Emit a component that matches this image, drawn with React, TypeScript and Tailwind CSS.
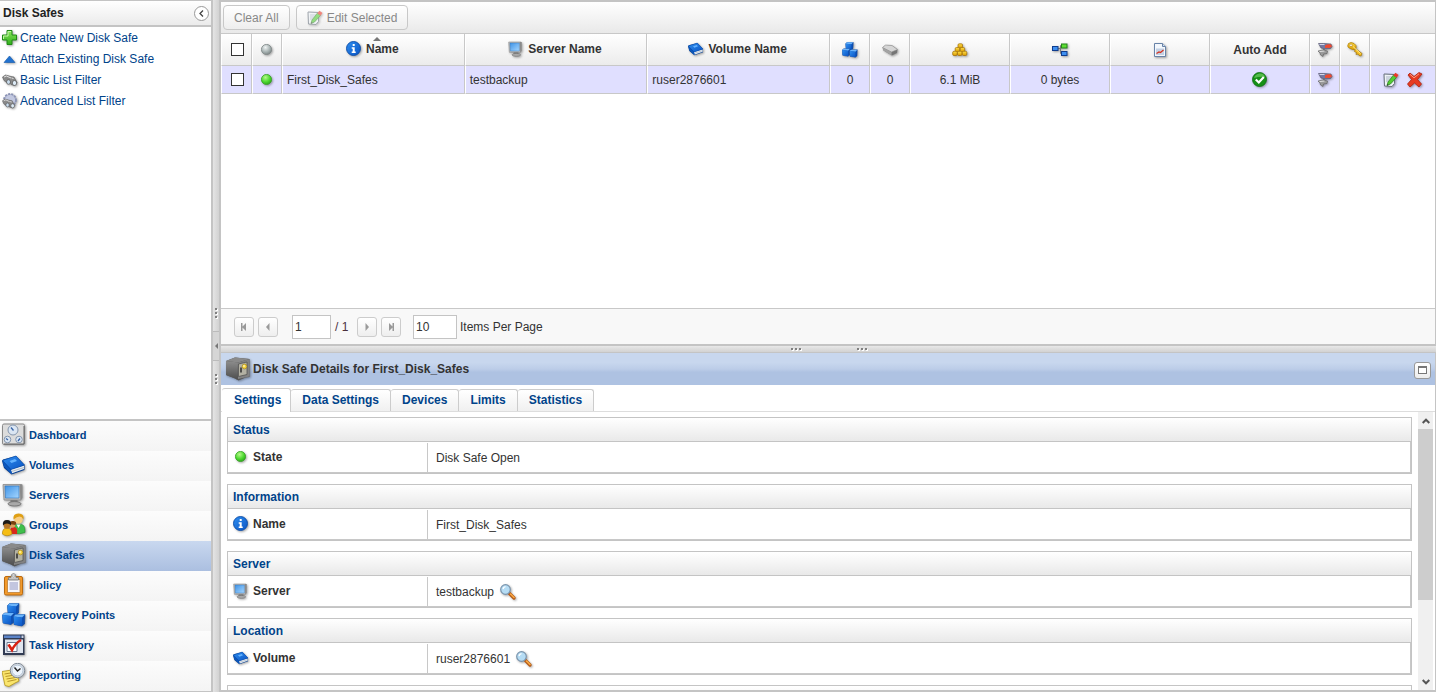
import type { ComponentType, ReactNode } from "react";

type IconProps = { size?: number };
type IconType = ComponentType<IconProps>;

function Svg({ size = 16, box = 16, children }: { size?: number; box?: number; children: ReactNode }) {
  return (
    <svg
      width={size}
      height={size}
      viewBox={`0 0 ${box} ${box}`}
      aria-hidden="true"
      className="shrink-0 drop-shadow-[1px_1px_1px_rgba(0,0,0,0.35)]"
    >
      {children}
    </svg>
  );
}

// Gradients shared by all the icons
function IconDefs() {
  return (
    <svg width="0" height="0" className="absolute" aria-hidden="true">
      <defs>
        <radialGradient id="g-green" cx="0.4" cy="0.3" r="0.7">
          <stop offset="0" stopColor="#b6f78c" />
          <stop offset="0.6" stopColor="#4fdb32" />
          <stop offset="1" stopColor="#2fa81e" />
        </radialGradient>
        <radialGradient id="g-gray" cx="0.4" cy="0.3" r="0.7">
          <stop offset="0" stopColor="#f1f5f5" />
          <stop offset="0.6" stopColor="#aab5b5" />
          <stop offset="1" stopColor="#7f8888" />
        </radialGradient>
        <linearGradient id="g-blue" x1="0" y1="0" x2="1" y2="1">
          <stop offset="0" stopColor="#2f8ff0" />
          <stop offset="1" stopColor="#0a54c4" />
        </linearGradient>
        <linearGradient id="g-screen" x1="0" y1="0" x2="1" y2="1">
          <stop offset="0" stopColor="#3f93e6" />
          <stop offset="1" stopColor="#a5d6ff" />
        </linearGradient>
        <linearGradient id="g-metal" x1="0" y1="0" x2="0" y2="1">
          <stop offset="0" stopColor="#f4f4f4" />
          <stop offset="1" stopColor="#b5b5b5" />
        </linearGradient>
        <linearGradient id="g-dark" x1="0" y1="0" x2="0" y2="1">
          <stop offset="0" stopColor="#8d8d8d" />
          <stop offset="1" stopColor="#4c4c4c" />
        </linearGradient>
        <linearGradient id="g-gold" x1="0" y1="0" x2="0" y2="1">
          <stop offset="0" stopColor="#ffdf4a" />
          <stop offset="1" stopColor="#d99a00" />
        </linearGradient>
        <linearGradient id="g-leaf" x1="0" y1="0" x2="0" y2="1">
          <stop offset="0" stopColor="#8ae75c" />
          <stop offset="1" stopColor="#2fae1b" />
        </linearGradient>
      </defs>
    </svg>
  );
}

function PlusIcon({ size }: IconProps) {
  return (
    <Svg size={size}>
      <path d="M5 .500h5v4.500h4.500v5H10v4.500H5V10H.500V5H5z" fill="url(#g-leaf)" stroke="#218a16" />
      <path d="M6 6V1.500h3M1.500 9V6H6" fill="none" stroke="#c3f5a8" />
    </Svg>
  );
}

function TriangleIcon({ size }: IconProps) {
  return (
    <Svg size={size}>
      <path d="M7.500 5l5.500 6.500H2z" fill="#2272cf" stroke="#1259ad" strokeWidth="0.600" />
    </Svg>
  );
}

function BinocularsShape() {
  return (
    <>
      <path d="M.500 5L3.500 3l5.500 1.500 3 .500 3 5.500-2.500 3-3.500-1-1-3-2 2-4-3z" fill="#8a8a8a" stroke="#5a5a5a" strokeWidth="0.600" />
      <path d="M2 5l2.500-1L9 6M9.500 6l2 .500" stroke="#e2e2e2" fill="none" />
      <ellipse cx="6.500" cy="10" rx="2" ry="2.300" fill="#c9dced" stroke="#555" strokeWidth="0.700" />
      <ellipse cx="12.500" cy="11" rx="2.200" ry="2.500" fill="#dceaf6" stroke="#555" strokeWidth="0.700" />
    </>
  );
}

function BinocularsIcon({ size }: IconProps) {
  return (
    <Svg size={size}>
      <BinocularsShape />
    </Svg>
  );
}

function GearSearchIcon({ size }: IconProps) {
  return (
    <Svg size={size}>
      <circle cx="8" cy="7" r="6" fill="#a9b1cf" stroke="#8b93b5" strokeWidth="1.800" strokeDasharray="2 1.200" />
      <circle cx="8" cy="7" r="5" fill="#c2c8e0" />
      <g transform="translate(0 3.500) scale(0.850)">
        <BinocularsShape />
      </g>
    </Svg>
  );
}

function DashboardIcon({ size }: IconProps) {
  return (
    <Svg size={size} box={24}>
      <rect x="0.500" y="1" width="22" height="20.500" rx="1.500" fill="#dcdcdc" stroke="#8a8a8a" />
      <path d="M22 3v18H2" fill="none" stroke="#666" />
      <circle cx="11" cy="7" r="5" fill="#dbe6f3" stroke="#8596ad" />
      <circle cx="5.500" cy="16.500" r="3.300" fill="#dbe6f3" stroke="#8596ad" />
      <circle cx="17" cy="16.500" r="3.300" fill="#dbe6f3" stroke="#8596ad" />
      <path d="M9 4.500l2.500 3M4 15.500l2 1.500M16 18l2-2.500" stroke="#3965a8" strokeWidth="1.300" />
    </Svg>
  );
}

function BookIcon({ size }: IconProps) {
  return (
    <Svg size={size} box={24}>
      <path d="M0 8L1 6.500 14 3l8.500 9v5L9.500 21.500 2 15z" fill="#073f91" />
      <path d="M9 16.500l13-4v3.500L9.500 20.500z" fill="#e6ecf2" />
      <path d="M9.500 18.500L22 14.500" stroke="#9aa7b5" strokeWidth="0.700" />
      <path d="M.500 7.500L14 3l8.500 9L9 16.500z" fill="url(#g-blue)" stroke="#0c4da8" strokeWidth="0.600" />
      <path d="M7.500 8l5.500-2 2 2-5.500 2z" fill="#63b2ff" />
      <path d="M.500 7.500L2 13.500l7.500 7.500.500-1.500-1.500-3z" fill="#0b57bd" />
    </Svg>
  );
}

function MonitorIcon({ size }: IconProps) {
  return (
    <Svg size={size} box={24}>
      <path d="M1 1.500h18.500l-.500 15.500H2z" fill="#b9b9b9" stroke="#8c8c8c" strokeWidth="0.800" />
      <path d="M17.500 1.500h3v13.500l-2 2z" fill="#8a8a8a" />
      <path d="M3 3h14v12H3.500z" fill="url(#g-screen)" stroke="#2e73bd" strokeWidth="0.600" />
      <path d="M8.500 17h7v3h-7z" fill="#7b7b7b" />
      <ellipse cx="12.500" cy="20.800" rx="6.500" ry="2.200" fill="#a9a9a9" stroke="#6c6c6c" strokeWidth="0.800" />
    </Svg>
  );
}

function GroupsIcon({ size }: IconProps) {
  return (
    <Svg size={size} box={24}>
      <path d="M11 20v-3q0-6 6-6t6 6v2.500q-5 2-12 1z" fill="#3fbf4c" stroke="#258a31" strokeWidth="0.600" />
      <path d="M14.500 11.500l2 3.500 2-3.500z" fill="#fff" />
      <circle cx="16.500" cy="6.500" r="4.300" fill="#f8ce85" />
      <path d="M11.500 6.500q-1-6 5-6t5 6q-1.500-3-4-3t-6 3z" fill="#e0a015" />
      <path d="M8 21v-3q0-4 4-4t3 7z" fill="#d8281c" />
      <circle cx="10.500" cy="12" r="2.800" fill="#dca15c" />
      <path d="M7.500 11q0-3.500 4-3t2 4z" fill="#7a4310" />
      <path d="M.300 21q0-6 4.700-6t5 6q-5 3.500-9.700 0z" fill="#f5bd14" stroke="#ad7d00" strokeWidth="0.600" />
      <circle cx="5" cy="12.500" r="3.300" fill="#b87627" />
      <path d="M1 12.500q-1-5.500 4-5.500t4 5.500q-1.500-2-4-2t-4 2z" fill="#1d1a16" />
    </Svg>
  );
}

function SafeIcon({ size }: IconProps) {
  return (
    <Svg size={size} box={24}>
      <path d="M0 4L9 .500l14.500 1.500V20l-4 .500-7 3-3-2-9.500-3.500z" fill="#555" />
      <path d="M0 4L9 .500l14.500 1.500L12 5.500z" fill="#8a8a8a" />
      <path d="M0 4l12 1.500-.500 17.500-2.500-1.500L0 18z" fill="url(#g-dark)" />
      <path d="M12 5.500L23.500 2v17.500L12 22z" fill="#828282" />
      <path d="M12.500 7l8.500-2v12.500l-8.500 2z" fill="#b3b1a3" stroke="#4a4a4a" strokeWidth="0.700" />
      <path d="M15 10.500v5" stroke="#2b2b2b" strokeWidth="1.500" />
      <circle cx="18.500" cy="9.500" r="2.400" fill="#f4d13b" stroke="#8c6f12" strokeWidth="0.500" />
      <circle cx="18" cy="9" r="0.900" fill="#fff7bd" />
    </Svg>
  );
}

function PolicyIcon({ size }: IconProps) {
  return (
    <Svg size={size} box={24}>
      <rect x="2.500" y="3.500" width="18" height="18.500" rx="1.500" fill="#f39a2b" stroke="#b96a10" />
      <path d="M5.500 6.500h12.500v13H5.500z" fill="#f7f7fb" stroke="#b5772b" strokeWidth="0.700" />
      <path d="M7.500 10h8.500M7.500 12h8.500M7.500 14h8.500M7.500 16h8.500" stroke="#b2b7d6" strokeWidth="1.600" />
      <path d="M6.500 7V4.500H9q0-4 2.500-4t2.500 4h2.500V7z" fill="url(#g-metal)" stroke="#777" strokeWidth="0.800" />
      <circle cx="11.500" cy="3" r="1" fill="#fff" stroke="#777" strokeWidth="0.500" />
    </Svg>
  );
}

function Cube({ x, y }: { x: number; y: number }) {
  return (
    <g transform={`translate(${x} ${y})`} strokeLinejoin="round">
      <path d="M0 2l2-2h9.500L11 9.500 8.500 11.500.500 10z" fill="#0d50b5" stroke="#093f93" strokeWidth="0.600" />
      <path d="M0 2l2-2h9.500l-3 3z" fill="#6bb4fb" />
      <path d="M0 2l8.500 1v8.500L.500 10z" fill="url(#g-blue)" />
    </g>
  );
}

function CubesIcon({ size }: IconProps) {
  return (
    <Svg size={size} box={24}>
      <Cube x={5.5} y={0.5} />
      <Cube x={0.5} y={10} />
      <Cube x={11.5} y={11.5} />
    </Svg>
  );
}

function TaskHistoryIcon({ size }: IconProps) {
  return (
    <Svg size={size} box={24}>
      <path d="M1 1.500h21.500v20.500H1z" fill="#303a52" />
      <path d="M2 2.500h16.500v2.500H2z" fill="#5c84c8" />
      <path d="M19.500 2.500h2V5h-2z" fill="#c8d4ea" />
      <path d="M3 6.500h18V20H3z" fill="#dfe5ef" />
      <path d="M5 9.500h10v9H5z" fill="#fff" stroke="#6f7b91" />
      <path d="M6.500 11.500l3.500 5.500q3-6.500 9-10" fill="none" stroke="#d82214" strokeWidth="2.600" />
    </Svg>
  );
}

function ReportingIcon({ size }: IconProps) {
  return (
    <Svg size={size} box={24}>
      <path d="M0 8.500l13-2 4 11.500-4 2-6 3.500-4-1z" fill="#fae56c" stroke="#b59516" strokeWidth="0.800" />
      <path d="M2.500 11l9-1.500M3.500 13.500l9-1.500M4.500 16l9-1.500M5.500 18.500l9-2" stroke="#b08c1e" strokeWidth="0.900" />
      <circle cx="15.500" cy="7.500" r="7.200" fill="#d8dde4" stroke="#7e8996" />
      <circle cx="15.500" cy="7.500" r="5.400" fill="#eef5fd" stroke="#9fb3c9" strokeWidth="0.700" />
      <path d="M12.500 4.500l3 3.500 3-2.500" fill="none" stroke="#222" strokeWidth="1.500" />
    </Svg>
  );
}

function InfoIcon({ size }: IconProps) {
  return (
    <Svg size={size}>
      <circle cx="7.500" cy="7.500" r="7" fill="url(#g-blue)" stroke="#0b4da9" strokeWidth="0.900" />
      <path d="M6.700 3h2v2h-2zM5.700 6.200h3v4.300h1V12h-4v-1.500h1V7.700h-1z" fill="#fff" />
    </Svg>
  );
}

function GreenDotIcon({ size }: IconProps) {
  return (
    <Svg size={size}>
      <circle cx="7.500" cy="7.500" r="5.100" fill="url(#g-green)" stroke="#37a324" strokeWidth="0.800" />
    </Svg>
  );
}

function GrayDotIcon({ size }: IconProps) {
  return (
    <Svg size={size}>
      <circle cx="7.500" cy="7.500" r="5.100" fill="url(#g-gray)" stroke="#7d8686" strokeWidth="0.800" />
    </Svg>
  );
}

function DriveIcon({ size }: IconProps) {
  return (
    <Svg size={size}>
      <path d="M.500 5.500L3.500 3l6.500.500 5.500 4-.500 3.500-5 2.500-8.500-5z" fill="#757575" />
      <path d="M.500 5.500L3.500 3l6.500.500 5.500 4-6 2.500z" fill="#d6d6d6" stroke="#8b8b8b" strokeWidth="0.500" />
      <path d="M.500 5.500l9 4.500v3.500l-8-5z" fill="#a3a3a3" />
    </Svg>
  );
}

function GoldIcon({ size }: IconProps) {
  return (
    <Svg size={size}>
      <g fill="url(#g-gold)" stroke="#a06c00" strokeWidth="0.700">
        <rect x="6" y="1.800" width="4.500" height="4.200" rx="1.200" />
        <rect x="3.200" y="5.500" width="4.500" height="4.200" rx="1.200" />
        <rect x="8.200" y="5.500" width="4.500" height="4.200" rx="1.200" />
        <rect x="0.700" y="9.300" width="4.500" height="4.200" rx="1.200" />
        <rect x="5.500" y="9.300" width="4.500" height="4.200" rx="1.200" />
        <rect x="10.300" y="9.300" width="4.500" height="4.200" rx="1.200" />
      </g>
    </Svg>
  );
}

function NetworkIcon({ size }: IconProps) {
  return (
    <Svg size={size}>
      <path d="M5 6.500h3.500M8.500 3.500v8M8.500 3.500H10M8.500 11.500H10" stroke="#777" fill="none" />
      <rect x="0.500" y="4.500" width="5.500" height="4" fill="#3f8ff0" stroke="#0f3d8f" />
      <rect x="9.500" y="2" width="5.500" height="4" fill="#5ddc33" stroke="#22851a" />
      <rect x="9.500" y="9.500" width="5.500" height="4" fill="#3f8ff0" stroke="#0f3d8f" />
    </Svg>
  );
}

function ChartPageIcon({ size }: IconProps) {
  return (
    <Svg size={size}>
      <path d="M2.500 1.500h8l3 3v10h-11z" fill="#f3f7fc" stroke="#6883a8" />
      <path d="M10.500 1.500v3h3" fill="#d5e1f0" stroke="#6883a8" />
      <path d="M4 6.500h8V13H4z" fill="#c3d1e4" />
      <path d="M4.500 11.500l2.500-1.500 1.500.500 3-2.500" fill="none" stroke="#d8301c" strokeWidth="1.200" />
    </Svg>
  );
}

function DeviceIcon({ size }: IconProps) {
  return (
    <Svg size={size}>
      <path d="M1.500 1.500l5 0 7.500.500 1 2.500-1.500 2-5 .500L4 6z" fill="#7477a0" stroke="#4d4f67" strokeWidth="0.600" />
      <path d="M8 3.500q3-2 6-1l1 2-2.500 1.500q-3-.500-4.500 0z" fill="#ee4a2f" />
      <path d="M2.500 2.500l5 0" stroke="#d5d7ea" />
      <path d="M7 7v4" stroke="#777" strokeWidth="2" />
      <path d="M1 9l5-1 4.500 1-.500 2.500-3.500.500L6 14.500 3.500 13 3 11z" fill="#9a9a9a" stroke="#5b5b5b" strokeWidth="0.600" />
      <path d="M2.500 9.500l5-.500" stroke="#e2e2e2" />
    </Svg>
  );
}

function KeysIcon({ size }: IconProps) {
  return (
    <Svg size={size}>
      <path d="M8.500 6.500l6.500 5-1 2.500-2-.500-1-1.500-2 .500.500-2-2-1z" fill="#f3bd22" stroke="#a2740a" strokeWidth="0.700" />
      <path d="M1.500 1.500Q4-.500 7 1.500t2 4.500-3.500 1.500-4-2 0-4z" fill="url(#g-gold)" stroke="#b07d08" strokeWidth="0.800" />
      <circle cx="4" cy="3.300" r="1.300" fill="#fff" stroke="#b07d08" strokeWidth="0.600" />
      <path d="M6 4.500l7.500 7" stroke="#ffe98a" />
    </Svg>
  );
}

function CheckIcon({ size }: IconProps) {
  return (
    <Svg size={size}>
      <circle cx="7.500" cy="7.500" r="7" fill="#169016" stroke="#0b6f10" strokeWidth="0.800" />
      <path d="M2 6q1-4 5.500-4.500T13 5q-5-1-11 1z" fill="#54bb4b" />
      <path d="M3.800 7.500l3 3 5-5.500" fill="none" stroke="#fff" strokeWidth="2.200" />
    </Svg>
  );
}

function EditIcon({ size }: IconProps) {
  return (
    <Svg size={size}>
      <path d="M1 2l10.500.500v9L9 14.500l-7.500-.500z" fill="#eef2f6" stroke="#66707c" />
      <path d="M3 5h6M3 7h5M3 9h3" stroke="#a8b4c4" />
      <path d="M10.500 3l3 2.500L7.500 12 4 13.500 5 10z" fill="#52cc33" stroke="#27791b" strokeWidth="0.700" />
      <path d="M10.300 3.300L12.500.800 15.500 3l-2 2.700z" fill="#e93a2a" />
      <path d="M4 13.500l.400-1.600 1.300 1z" fill="#333" />
    </Svg>
  );
}

function DeleteIcon({ size }: IconProps) {
  return (
    <Svg size={size}>
      <path
        d="M3 1l4 3.500L12 .500l3 1.500-4.500 5.500 4 4.500-2.500 3-4.500-4-4.500 4L.500 12l4-4.500L1 3z"
        fill="#e63b22"
        stroke="#b0200d"
        strokeWidth="0.800"
        strokeLinejoin="round"
      />
      <path d="M3 2.300l4 3.500 5-4" fill="none" stroke="#ff9c82" />
    </Svg>
  );
}

function MagnifierIcon({ size }: IconProps) {
  return (
    <Svg size={size}>
      <path d="M9.500 9.500l4.500 4.500" stroke="#b55a17" strokeWidth="3.200" strokeLinecap="round" />
      <path d="M10.500 10l3.500 3.500" stroke="#f9a944" strokeWidth="1.600" strokeLinecap="round" />
      <circle cx="5.500" cy="5.500" r="4.800" fill="#b5dcf4" stroke="#7b95ad" strokeWidth="1.200" />
      <path d="M3 5q.500-2 2.500-2.300" fill="none" stroke="#fff" strokeWidth="1.300" />
    </Svg>
  );
}

const actions: { label: string; icon: IconType }[] = [
  { label: "Create New Disk Safe", icon: PlusIcon },
  { label: "Attach Existing Disk Safe", icon: TriangleIcon },
  { label: "Basic List Filter", icon: BinocularsIcon },
  { label: "Advanced List Filter", icon: GearSearchIcon },
];

const navItems: { label: string; icon: IconType }[] = [
  { label: "Dashboard", icon: DashboardIcon },
  { label: "Volumes", icon: BookIcon },
  { label: "Servers", icon: MonitorIcon },
  { label: "Groups", icon: GroupsIcon },
  { label: "Disk Safes", icon: SafeIcon },
  { label: "Policy", icon: PolicyIcon },
  { label: "Recovery Points", icon: CubesIcon },
  { label: "Task History", icon: TaskHistoryIcon },
  { label: "Reporting", icon: ReportingIcon },
];

const columns: { width: string; label?: string; icon?: IconType; sorted?: boolean }[] = [
  { width: "w-[30px]", icon: GrayDotIcon },
  { width: "", label: "Name", icon: InfoIcon, sorted: true },
  { width: "", label: "Server Name", icon: MonitorIcon },
  { width: "", label: "Volume Name", icon: BookIcon },
  { width: "w-[40px]", icon: CubesIcon },
  { width: "w-[40px]", icon: DriveIcon },
  { width: "w-[100px]", icon: GoldIcon },
  { width: "w-[100px]", icon: NetworkIcon },
  { width: "w-[100px]", icon: ChartPageIcon },
  { width: "w-[100px]", label: "Auto Add" },
  { width: "w-[30px]", icon: DeviceIcon },
  { width: "w-[30px]", icon: KeysIcon },
  { width: "w-[65px]" },
];

const tabs = ["Settings", "Data Settings", "Devices", "Limits", "Statistics"];

const sections: { title: string; label: string; icon: IconType; value: string; lookup?: boolean }[] = [
  { title: "Status", label: "State", icon: GreenDotIcon, value: "Disk Safe Open" },
  { title: "Information", label: "Name", icon: InfoIcon, value: "First_Disk_Safes" },
  { title: "Server", label: "Server", icon: MonitorIcon, value: "testbackup", lookup: true },
  { title: "Location", label: "Volume", icon: BookIcon, value: "ruser2876601", lookup: true },
];

function Sidebar() {
  return (
    <aside className="flex w-[213px] shrink-0 flex-col border-y border-r-2 border-[#c4c4c4] bg-white">
      <header className="flex h-[26px] shrink-0 items-center justify-between border-b-2 border-[#c4c4c4] bg-linear-to-b from-white to-[#ebebeb] pr-[2px] pl-[3px]">
        <h1 className="font-bold text-[#222]">Disk Safes</h1>
        <button
          type="button"
          aria-label="Collapse"
          className="grid size-[15px] place-items-center rounded-full border border-[#999] bg-white"
        >
          <svg width="5" height="7" viewBox="0 0 5 7" fill="none" stroke="#444" strokeWidth="1.300">
            <path d="M4 .500l-3 3 3 3" />
          </svg>
        </button>
      </header>
      <ul className="flex-1">
        {actions.map(({ label, icon: Icon }) => (
          <li key={label}>
            <a href="#" className="flex h-[21px] items-center gap-[2px] pl-[2px] text-[#00438a]">
              <Icon />
              {label}
            </a>
          </li>
        ))}
      </ul>
      <nav className="border-t-2 border-[#c4c4c4] text-[11px] font-bold">
        {navItems.map(({ label, icon: Icon }) => (
          <a
            key={label}
            href="#"
            className={
              label === "Disk Safes"
                ? "flex h-[30px] items-center gap-[3px] bg-linear-to-b from-[#c9d8ef] to-[#abbfe0] pb-[2px] pl-[2px] text-[#00438a]"
                : "flex h-[30px] items-center gap-[3px] bg-linear-to-b from-[#fcfcfc] to-[#f4f4f4] pb-[2px] pl-[2px] text-[#00438a]"
            }
          >
            <Icon size={24} />
            {label}
          </a>
        ))}
      </nav>
    </aside>
  );
}

function Dots({ vertical = false }: { vertical?: boolean }) {
  return (
    <span className={vertical ? "flex flex-col gap-[2px]" : "flex gap-[2px]"}>
      {[0, 1, 2].map((dot) => (
        <span key={dot} className="size-[2px] bg-[#808080] shadow-[1px_1px_0_#fff]" />
      ))}
    </span>
  );
}

function VerticalSplitter() {
  return (
    <div className="flex w-[8px] shrink-0 flex-col items-center justify-center gap-[13px] border-r-2 border-[#c4c4c4] bg-linear-to-r from-[#e4e4e4] to-[#d2d2d2]">
      <Dots vertical />
      <button
        type="button"
        aria-label="Collapse side panel"
        className="grid h-[30px] w-full place-items-center border-y border-[#bbb] bg-[#d6d6d6]"
      >
        <svg width="3" height="6" viewBox="0 0 3 6" fill="#777">
          <path d="M3 0v6L0 3z" />
        </svg>
      </button>
      <Dots vertical />
    </div>
  );
}

function Toolbar() {
  const button =
    "flex h-[25px] items-center gap-[4px] rounded border border-[#c8c8c8] bg-linear-to-b from-white to-[#eee] px-[10px] text-[#888]";

  return (
    <div className="flex h-[32px] shrink-0 items-center gap-[6px] border-b border-[#c8c8c8] bg-linear-to-b from-white to-[#e9e9e9] pl-[2px]">
      <button type="button" className={button}>
        Clear All
      </button>
      <button type="button" className={button}>
        <span className="opacity-60">
          <EditIcon />
        </span>
        Edit Selected
      </button>
    </div>
  );
}

function Checkbox({ label }: { label: string }) {
  return (
    <input
      type="checkbox"
      aria-label={label}
      className="block size-[13px] appearance-none border border-[#333] bg-white checked:bg-[#00438a]"
    />
  );
}

function SafesTable() {
  const th =
    "relative h-[32px] border-r border-b border-l border-r-[#c8c8c8] border-b-[#c8c8c8] border-l-white p-0 last:border-r-0";
  const td = "h-[28px] border-r border-b border-l border-r-[#c8c8c8] border-b-[#c8c8c8] border-l-white p-0 last:border-r-0";

  return (
    <table className="w-full table-fixed border-separate border-spacing-0">
      <thead>
        <tr className="bg-linear-to-b from-white to-[#ebebeb]">
          <th className={`${th} w-[31px]`}>
            <div className="flex justify-center pl-px">
              <Checkbox label="Select all" />
            </div>
          </th>
          {columns.map(({ width, label, icon: Icon, sorted }, index) => (
            <th key={index} className={`${th} ${width}`}>
              {sorted && (
                <svg width="8" height="4" viewBox="0 0 8 4" fill="#777" className="absolute top-[3px] left-1/2">
                  <path d="M0 4h8L4 0z" />
                </svg>
              )}
              <div
                className={
                  Icon && label
                    ? "flex items-center justify-center gap-[4px] pr-[2px] pb-[2px]"
                    : "flex items-center justify-center"
                }
              >
                {Icon && <Icon />}
                {label}
              </div>
            </th>
          ))}
        </tr>
      </thead>
      <tbody>
        <tr className="bg-[#e0dfff]">
          <td className={td}>
            <div className="flex justify-center pl-px">
              <Checkbox label="Select First_Disk_Safes" />
            </div>
          </td>
          <td className={td}>
            <div className="flex justify-center">
              <GreenDotIcon />
            </div>
          </td>
          <td className={`${td} pl-[4px]`}>First_Disk_Safes</td>
          <td className={`${td} pl-[4px]`}>testbackup</td>
          <td className={`${td} pl-[4px]`}>ruser2876601</td>
          <td className={`${td} text-center`}>0</td>
          <td className={`${td} text-center`}>0</td>
          <td className={`${td} text-center`}>6.1 MiB</td>
          <td className={`${td} text-center`}>0 bytes</td>
          <td className={`${td} text-center`}>0</td>
          <td className={td}>
            <div className="flex justify-center">
              <CheckIcon />
            </div>
          </td>
          <td className={td}>
            <div className="flex justify-center">
              <DeviceIcon />
            </div>
          </td>
          <td className={td} />
          <td className={td}>
            <div className="flex justify-center gap-[8px]">
              <button type="button" aria-label="Edit">
                <EditIcon />
              </button>
              <button type="button" aria-label="Delete">
                <DeleteIcon />
              </button>
            </div>
          </td>
        </tr>
      </tbody>
    </table>
  );
}

function PageButton({ label, path }: { label: string; path: string }) {
  return (
    <button
      type="button"
      aria-label={label}
      className="grid size-[20px] place-items-center rounded-[3px] border border-[#ccc] bg-linear-to-b from-white to-[#eee]"
    >
      <svg width="8" height="8" viewBox="0 0 8 8" fill="#999">
        <path d={path} />
      </svg>
    </button>
  );
}

function Pager() {
  const input = "h-[24px] border border-[#c4c4c4] bg-white px-[2px] outline-none";

  return (
    <div className="flex h-[36px] shrink-0 items-center border-t border-[#c8c8c8] bg-[#f8f8f8] pl-[13px]">
      <div className="flex gap-[4px]">
        <PageButton label="First page" path="M1 0h1.500v3.500L6 0v8L2.500 4.500V8H1z" />
        <PageButton label="Previous page" path="M5.500 0v8L2 4z" />
      </div>
      <input type="text" aria-label="Page" defaultValue="1" className={`${input} ml-[14px] w-[39px]`} />
      <span className="ml-[4px] w-[22px] text-[#4a2f3c]">/ 1</span>
      <div className="flex gap-[4px]">
        <PageButton label="Next page" path="M2.500 0v8L6 4z" />
        <PageButton label="Last page" path="M7 0H5.500v3.500L2 0v8l3.500-3.500V8H7z" />
      </div>
      <input id="page-size" type="text" defaultValue="10" className={`${input} ml-[12px] w-[44px]`} />
      <label htmlFor="page-size" className="ml-[3px]">
        Items Per Page
      </label>
    </div>
  );
}

function Section({ title, children }: { title?: string; children?: ReactNode }) {
  return (
    <section className="border border-[#c4c4c4]">
      <h3 className="h-[24px] border-b border-[#c4c4c4] bg-linear-to-b from-white to-[#e9e9e9] pl-[5px] leading-[24px] font-bold text-[#00438a]">
        {title}
      </h3>
      <div className="h-[31px] border-r border-b border-[#c8c8c8] pt-px">{children}</div>
    </section>
  );
}

function ScrollBar() {
  return (
    <div className="mr-[2px] flex w-[15px] shrink-0 flex-col bg-[#f0f0f0]">
      <button type="button" aria-label="Scroll up" className="grid h-[17px] place-items-center">
        <svg width="8" height="6" viewBox="0 0 8 6" fill="none" stroke="#555" strokeWidth="2">
          <path d="M.700 5L4 1.700 7.300 5" />
        </svg>
      </button>
      <div className="flex-1">
        <div className="h-[70%] bg-[#cdcdcd]" />
      </div>
      <button type="button" aria-label="Scroll down" className="grid h-[17px] place-items-center">
        <svg width="8" height="6" viewBox="0 0 8 6" fill="none" stroke="#555" strokeWidth="2">
          <path d="M.700 1L4 4.300 7.300 1" />
        </svg>
      </button>
    </div>
  );
}

function Details() {
  return (
    <div className="flex min-h-0 flex-1 flex-col border-r border-b-2 border-[#c4c4c4] bg-white">
      <header className="flex h-[32px] shrink-0 items-center bg-[linear-gradient(#c8d7ee_30%,#bccde8_50%,#aec2e2_60%)] pr-[4px] pl-[5px]">
        <SafeIcon size={24} />
        <h2 className="ml-[3px] flex-1 font-bold">Disk Safe Details for First_Disk_Safes</h2>
        <button
          type="button"
          aria-label="Maximize"
          className="mt-[2px] grid size-[17px] place-items-center rounded-[3px] border border-[#999] bg-linear-to-b from-white to-[#ececec]"
        >
          <span className="h-[8px] w-[9px] border border-t-2 border-[#777] bg-white" />
        </button>
      </header>
      <div role="tablist" className="flex h-[27px] shrink-0 items-end border-b border-[#ddd] pl-px">
        {tabs.map((tab, index) => (
          <button
            key={tab}
            type="button"
            role="tab"
            aria-selected={index === 0}
            className={
              index === 0
                ? "-mb-px h-[24px] rounded-t-[3px] border-t border-r border-[#ccc] bg-white pr-[9px] pb-[2px] pl-[12px] font-bold text-[#00438a]"
                : "h-[22px] rounded-t-[3px] border-t border-r border-[#ccc] bg-linear-to-b from-white to-[#f0f0f0] px-[11px] pb-[2px] font-bold text-[#00438a]"
            }
          >
            {tab}
          </button>
        ))}
      </div>
      <div className="flex min-h-0 flex-1">
        <div className="flex-1 space-y-[10px] overflow-y-auto pt-[5px] pr-[6px] pl-[6px] [scrollbar-width:none]">
          {sections.map(({ title, label, icon: Icon, value, lookup }) => (
            <Section key={title} title={title}>
              <dl className="flex h-full">
                <dt className="flex w-[200px] items-center gap-[4px] border-r border-[#c8c8c8] pb-[2px] pl-[5px] font-bold">
                  <Icon />
                  {label}
                </dt>
                <dd className="flex items-center gap-[6px] pl-[8px]">
                  {value}
                  {lookup && (
                    <button type="button" aria-label={`Show ${value}`}>
                      <MagnifierIcon />
                    </button>
                  )}
                </dd>
              </dl>
            </Section>
          ))}
          <Section />
        </div>
        <ScrollBar />
      </div>
    </div>
  );
}

export default function App() {
  return (
    <div className="flex h-screen overflow-hidden bg-white font-['Liberation_Sans',Arial,sans-serif] text-[12px] leading-[16px] text-[#333]">
      <IconDefs />
      <Sidebar />
      <VerticalSplitter />
      <main className="flex min-w-0 flex-1 flex-col">
        <div className="flex h-1/2 flex-col border-y-2 border-r border-[#c4c4c4]">
          <Toolbar />
          <div className="flex-1 overflow-y-auto">
            <SafesTable />
          </div>
          <Pager />
        </div>
        <div className="flex h-[7px] shrink-0 items-center justify-center gap-[56px] border-b border-[#c4c4c4] bg-linear-to-b from-[#e8e8e8] to-[#d2d2d2]">
          <Dots />
          <Dots />
        </div>
        <Details />
      </main>
    </div>
  );
}
